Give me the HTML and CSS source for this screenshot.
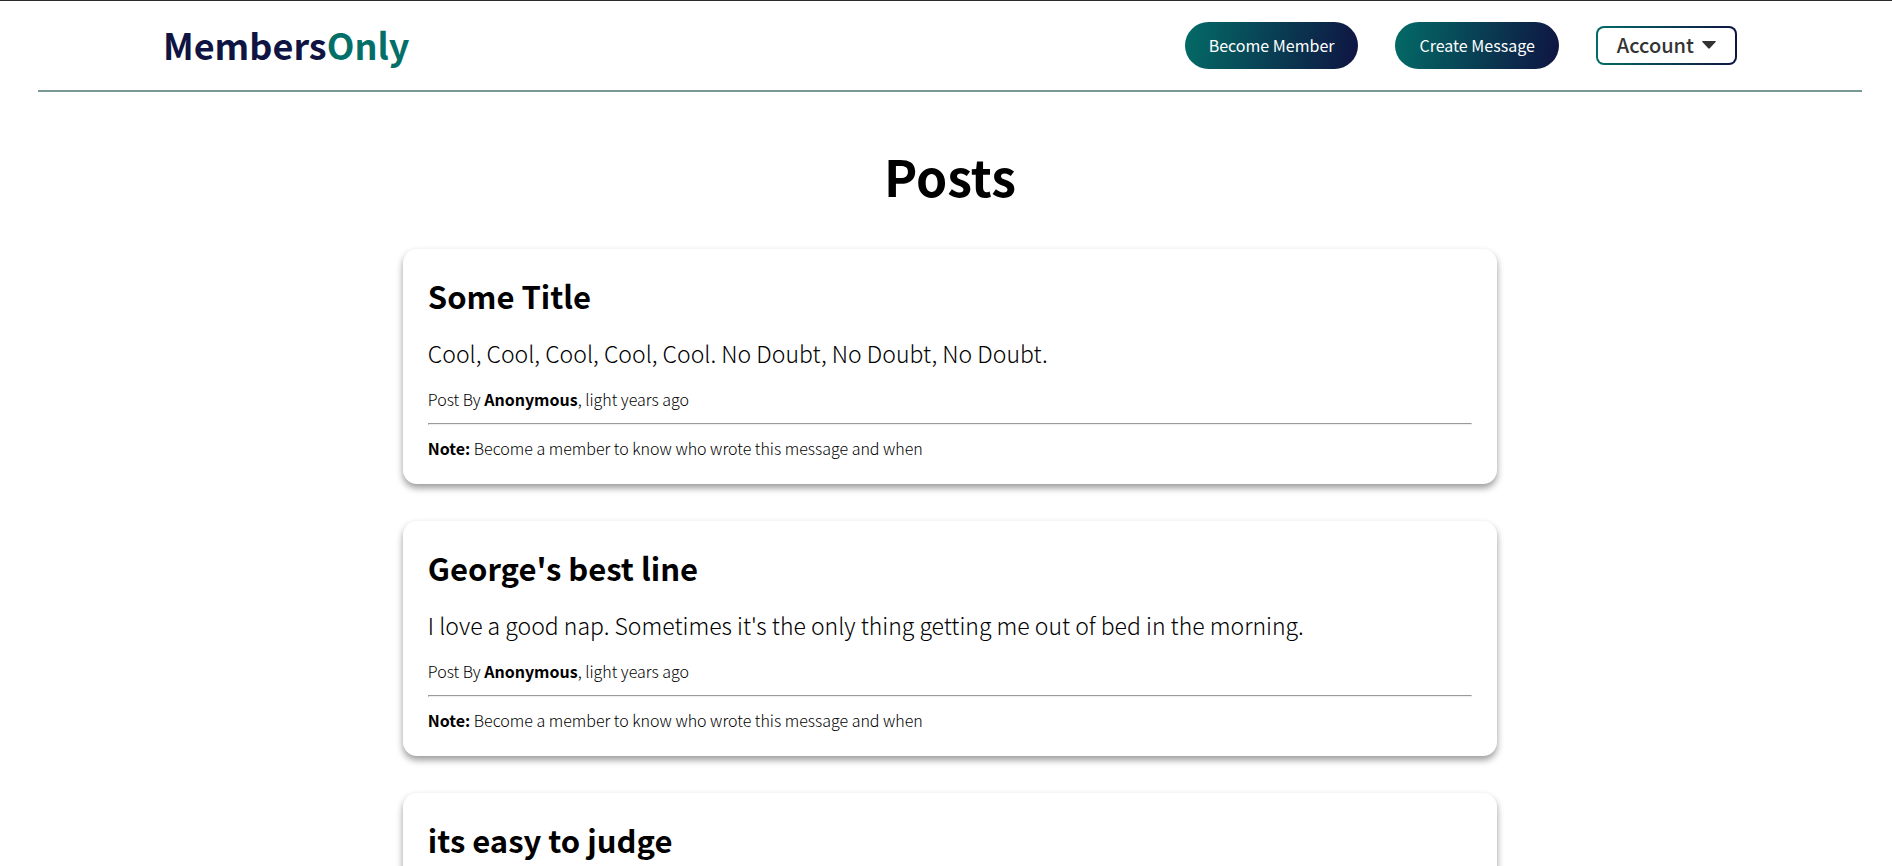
FILE: index.html
```html
<!DOCTYPE html>
<html lang="en">
<head>
<meta charset="utf-8">
<title>Members Only</title>
<link rel="stylesheet" href="styles.css">
</head>
<body>
<header class="header">
  <a class="logo" href="#">Members<span class="logo-accent">Only</span></a>
  <nav class="nav">
    <a class="pill" href="#">Become Member</a>
    <a class="pill" href="#">Create Message</a>
    <button class="account" type="button">Account
      <svg class="caret" viewBox="0 0 14 8" aria-hidden="true"><path d="M.6 0h12.800q.9 .3 .2 1L7.800 7.300q-.8 .8-1.600 0L.4 1Q-.3 .3 .6 0z"/></svg>
    </button>
  </nav>
</header>
<main class="main">
  <h1 class="page-title">Posts</h1>
  <article class="card">
    <h2 class="card-title">Some Title</h2>
    <p class="card-text">Cool, Cool, Cool, Cool, Cool. No Doubt, No Doubt, No Doubt.</p>
    <p class="card-meta">Post By <b>Anonymous</b>, light years ago</p>
    <hr class="card-rule">
    <p class="card-meta"><b>Note:</b> Become a member to know who wrote this message and when</p>
  </article>
  <article class="card">
    <h2 class="card-title">George's best line</h2>
    <p class="card-text">I love a good nap. Sometimes it's the only thing getting me out of bed in the morning.</p>
    <p class="card-meta">Post By <b>Anonymous</b>, light years ago</p>
    <hr class="card-rule">
    <p class="card-meta"><b>Note:</b> Become a member to know who wrote this message and when</p>
  </article>
  <article class="card">
    <h2 class="card-title">its easy to judge</h2>
  </article>
</main>
</body>
</html>
```
FILE: styles.css
```css
* { box-sizing: border-box; margin: 0; }
body { padding: 0 30px 0 38px; font-family: "Noto Sans CJK SC", "Noto Sans", sans-serif; color: #000; background: #fff; border-top: 1px solid #2b2b2b; }
b { font-weight: 700; }
.header { display: flex; align-items: center; justify-content: space-between; height: 91px; padding: 0 125px; border-bottom: 2px solid #7a9996; }
.logo { padding-bottom: 4px; font-size: 36px; font-weight: 700; color: #0f1442; text-decoration: none; }
.logo-accent { color: #036f68; }
.nav { display: flex; align-items: center; gap: 37px; }
.pill { padding: 0 24px; line-height: 47px; border-radius: 24px; color: #fff; font-size: 16px; text-decoration: none; background: linear-gradient(100deg, #036b66, #0f1442); }
.account { display: flex; align-items: center; gap: 8px; height: 39px; padding: 0 19px 2px; font-family: inherit; font-size: 20px; font-weight: 500; border: 2px solid transparent; border-radius: 8px; color: #333; background: linear-gradient(#fff, #fff) padding-box, linear-gradient(to right, #036b66, #0f1442) border-box; }
.caret { width: 14px; height: 8px; fill: #333; }
.main { width: 60%; margin: 0 auto; }
.page-title { margin: 45px 0 36px; text-align: center; font-size: 50px; line-height: 76px; }
.card { padding: 24px 25px; margin-bottom: 37px; border-radius: 14px; box-shadow: 0 4px 7px rgba(0,0,0,.4); }
.card-title { font-size: 31px; line-height: 46px; }
.card-text { margin: 16px 0; font-size: 23px; line-height: 36px; font-weight: 300; }
.card-meta { font-size: 16px; line-height: 24px; font-weight: 300; }
.card-rule { margin: 12px 0 11px; border: 1px solid; border-color: #9a9a9a #eee #eee #9a9a9a; }
```
